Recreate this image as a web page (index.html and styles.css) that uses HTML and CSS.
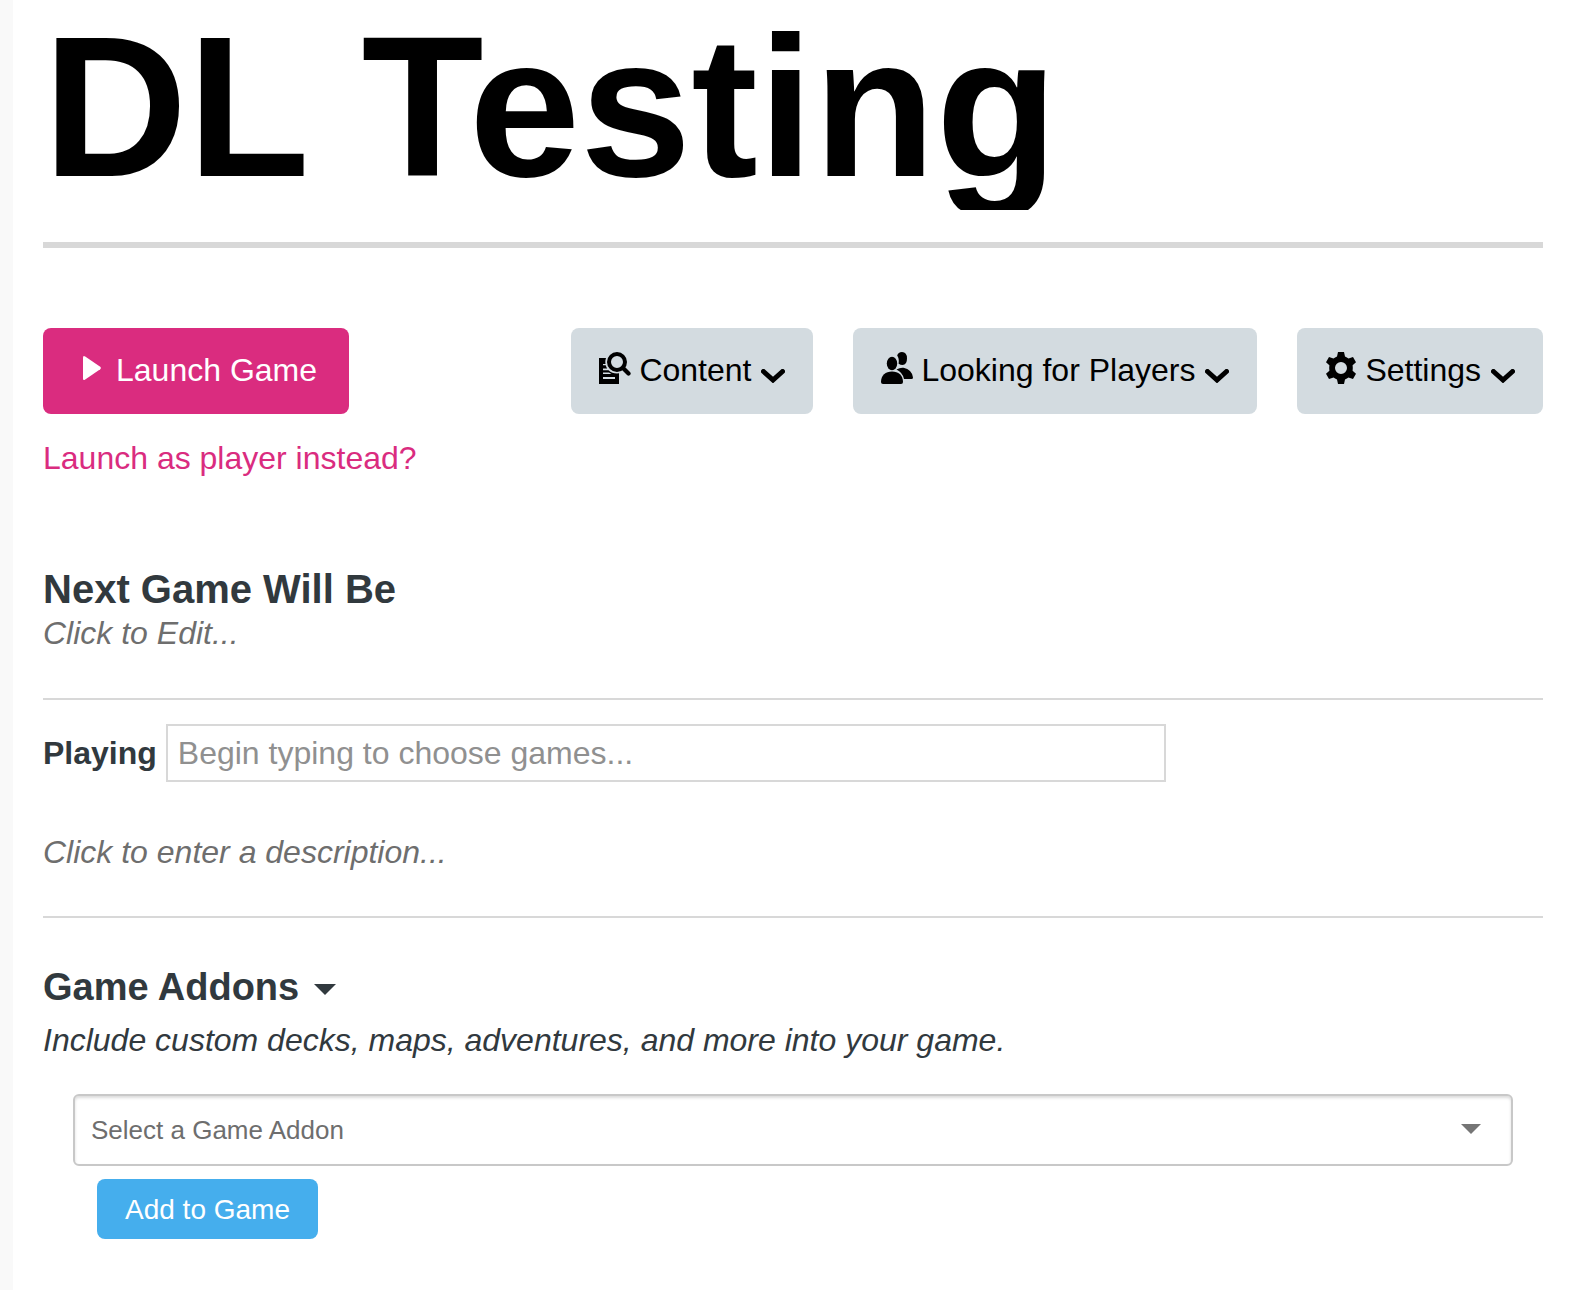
FILE: index.html
```html
<!DOCTYPE html>
<html lang="en">
<head>
  <meta charset="UTF-8">
  <meta name="viewport" content="width=device-width, initial-scale=1">
  <title>DL Testing</title>
  <link rel="stylesheet" href="styles.css">
</head>
<body>
  <main class="page">
    <header class="page-header">
      <h1>DL Testing</h1>
    </header>

    <div class="toolbar">
      <button type="button" class="btn btn-launch">
        <svg class="icon" viewBox="0 0 32 32" aria-hidden="true"><path d="M8 5.500Q8 3 10.200 4.400L25.200 14.800Q26.800 16 25.200 17.200L10.200 27.600Q8 29 8 26.500Z"/></svg>
        Launch Game
      </button>
      <nav class="menus">
        <button type="button" class="btn btn-menu">
          <svg class="icon" viewBox="0 0 32 32" aria-hidden="true">
            <path fill-rule="evenodd" d="M0 6H7Q6.300 8 6.300 10L6.500 12H4V13.200H6.700Q7.200 15 8.200 16.500H4V18.200H9.500Q13 21.500 18 21.500L20 21.300V32H0ZM4 20.500V22H12.500L10 20.500ZM4 25V27H16V25Z"/>
            <circle cx="18" cy="10" r="8" fill="none" stroke="currentColor" stroke-width="4"/>
            <path d="M24 16L29.500 21.500" fill="none" stroke="currentColor" stroke-width="4.200" stroke-linecap="round"/>
          </svg>
          Content
          <svg class="chevron" viewBox="0 0 24 14" aria-hidden="true"><path d="M2.500 2.500L12 11L21.500 2.500"/></svg>
        </button>
        <button type="button" class="btn btn-menu">
          <svg class="icon" viewBox="0 0 32 32" aria-hidden="true">
            <path d="M16.200 3.500Q17.200 0 21 0Q26 0 26 6.500Q26 13 21.500 13Q19.500 13 17.600 11.800Q18.400 6.500 16.200 3.500Z"/>
            <path d="M15.500 17.600Q19 15.300 22.500 15.700Q31 17.500 32 25.500Q32 27 30.500 27H23Q21.500 20.500 15.500 17.600Z"/>
            <ellipse cx="11" cy="11.500" rx="5.200" ry="6.800"/>
            <path d="M0 30C0 23.500 4.500 19.500 11 19.500S22 23.500 22 30Q22 32 20 32H2Q0 32 0 30Z"/>
          </svg>
          Looking for Players
          <svg class="chevron" viewBox="0 0 24 14" aria-hidden="true"><path d="M2.500 2.500L12 11L21.500 2.500"/></svg>
        </button>
        <button type="button" class="btn btn-menu">
          <svg class="icon" viewBox="0 0 32 32" aria-hidden="true">
            <path fill-rule="evenodd" d="M13 0H19L20 4.500Q22 5.300 23.500 6.500L28 5L31 10.200L27.600 13.300Q28 16 27.600 18.700L31 21.800L28 27L23.500 25.500Q22 26.700 20 27.500L19 32H13L12 27.500Q10 26.700 8.500 25.500L4 27L1 21.800L4.400 18.700Q4 16 4.400 13.300L1 10.200L4 5L8.500 6.500Q10 5.300 12 4.500ZM16 10A6 6 0 1 0 16 22A6 6 0 1 0 16 10Z"/>
          </svg>
          Settings
          <svg class="chevron" viewBox="0 0 24 14" aria-hidden="true"><path d="M2.500 2.500L12 11L21.500 2.500"/></svg>
        </button>
      </nav>
    </div>
    <a class="player-link" href="#">Launch as player instead?</a>

    <section class="next-game">
      <h2>Next Game Will Be</h2>
      <button type="button" class="editable">Click to Edit...</button>
    </section>

    <section class="details">
      <div class="playing">
        <label for="games">Playing</label>
        <input type="text" id="games" placeholder="Begin typing to choose games...">
      </div>
      <button type="button" class="editable">Click to enter a description...</button>
    </section>

    <section class="addons">
      <h3>
        <button type="button" class="addons-toggle" aria-expanded="true">Game Addons <span class="caret"></span></button>
      </h3>
      <p>Include custom decks, maps, adventures, and more into your game.</p>
      <div class="addon-form">
        <div class="select-wrap">
          <select aria-label="Game addon">
            <option>Select a Game Addon</option>
          </select>
        </div>
        <button type="button" class="btn-add">Add to Game</button>
      </div>
    </section>
  </main>
</body>
</html>
```

FILE: styles.css
```css
* {
  box-sizing: border-box;
}
body {
  margin: 0;
  padding-left: 13px;
  background: #f9f9f9;
  color: #31393e;
  font-family: "Liberation Sans", Arial, sans-serif;
  font-size: 32px;
  line-height: 40px;
}
button, input, select {
  font: inherit;
  color: inherit;
}
button {
  margin: 0;
  padding: 0;
  border: 0;
  background: none;
  cursor: pointer;
}
h1, h2, h3, p {
  margin: 0;
}
.page {
  min-height: 100vh;
  padding: 4px 35px 40px 30px;
  background: #fff;
}

/* Header */
.page-header {
  padding-bottom: 32px;
  border-bottom: 6px solid #d8d8d8;
}
h1 {
  overflow: hidden;
  color: #000;
  font-size: 200px;
  line-height: 206px;
}

/* Toolbar */
.toolbar {
  display: flex;
  flex-wrap: wrap;
  justify-content: space-between;
  gap: 24px;
  margin-top: 80px;
}
.menus {
  display: flex;
  flex-wrap: wrap;
  gap: 24px 40px;
}
.btn {
  display: flex;
  align-items: center;
  gap: 8px;
  padding: 26px 28px 28px;
  border-radius: 8px;
  line-height: 32px;
  white-space: nowrap;
}
.btn-launch {
  gap: 9px;
  padding-left: 32px;
  padding-right: 32px;
  background: #da2c7f;
  color: #fff;
}
.btn-menu {
  background: #d3dbe0;
  color: #000;
}
.icon {
  width: 32px;
  height: 32px;
  margin-top: -4px;
  fill: currentColor;
}
.chevron {
  width: 24px;
  height: 14px;
  margin: 11px 0 0 2px;
  fill: none;
  stroke: currentColor;
  stroke-width: 5;
  stroke-linecap: round;
}
.player-link {
  display: inline-block;
  margin-top: 24px;
  color: #da2c7f;
  text-decoration: none;
}

/* Next game */
.next-game {
  margin-top: 87px;
  padding-bottom: 45px;
  border-bottom: 2px solid #d8d8d8;
}
h2 {
  font-size: 40px;
  line-height: 48px;
}
.editable {
  display: block;
  color: #6e6e6e;
  font-style: italic;
  cursor: text;
}

/* Playing and description */
.details {
  padding: 24px 0 44px;
  border-bottom: 2px solid #d8d8d8;
}
.playing {
  display: flex;
  align-items: center;
  gap: 9px;
  margin-bottom: 50px;
}
.playing label {
  font-weight: bold;
}
.playing input {
  width: calc(100% * 2 / 3);
  height: 58px;
  padding: 0 10px;
  border: 2px solid #d8d8d8;
  background: #fff;
}
.playing input::placeholder {
  color: #909090;
  opacity: 1;
}

/* Addons */
.addons {
  margin-top: 45px;
}
h3 {
  font-size: 38px;
  line-height: 48px;
}
.addons-toggle {
  display: flex;
  align-items: center;
  gap: 15px;
}
.caret {
  margin-top: 4px;
  border: 11px solid transparent;
  border-top-color: #31393e;
  border-bottom: 0;
}
.addons p {
  margin-top: 9px;
  font-style: italic;
}
.addon-form {
  margin-top: 34px;
  padding: 0 30px;
}
.select-wrap {
  position: relative;
}
.select-wrap::after {
  content: "";
  position: absolute;
  top: 30px;
  right: 32px;
  border: 10px solid transparent;
  border-top-color: #757575;
  border-bottom: 0;
  pointer-events: none;
}
select {
  appearance: none;
  display: block;
  width: 100%;
  height: 72px;
  padding: 0 60px 0 16px;
  border: 2px solid #c8c8c8;
  border-radius: 6px;
  background: #fff;
  box-shadow: inset 0 2px 3px rgba(0, 0, 0, 0.14);
  color: #6e6e6e;
  font-size: 26px;
}
.btn-add {
  margin: 13px 0 0 24px;
  padding: 16px 28px 14px;
  border-radius: 8px;
  background: #45aeed;
  color: #fff;
  font-size: 28px;
  line-height: 30px;
}
```
